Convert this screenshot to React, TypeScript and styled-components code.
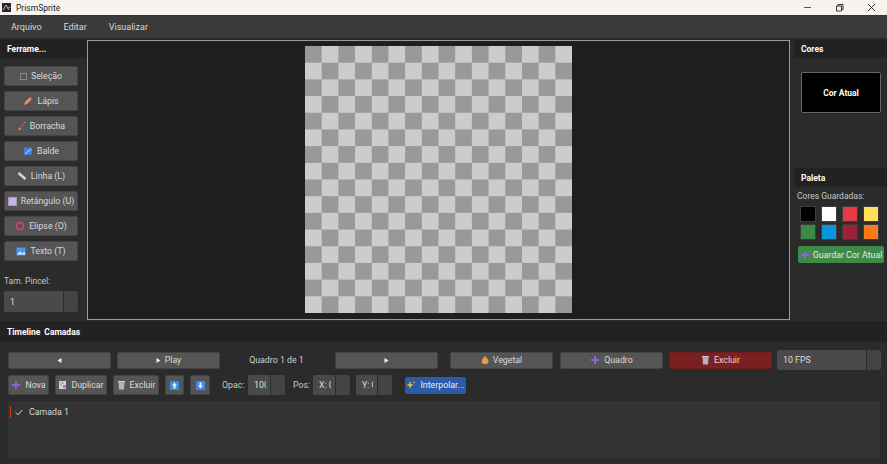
import React from "react";
import styled, { createGlobalStyle, css } from "styled-components";

const Global = createGlobalStyle`
  html, body { margin: 0; padding: 0; background: #2b2b2b; }
  * { box-sizing: border-box; }
  #root { width: 887px; height: 464px; overflow: hidden; }
`;

const Window = styled.div`
  width: 887px; height: 464px; display: flex; flex-direction: column;
  background: #2b2b2b; color: #dcdcdc;
  font-family: Roboto, "Open Sans", "Liberation Sans", sans-serif; font-size: 8.8px;
`;
const TitleBar = styled.div`
  height: 15px; flex: none; background: #f9f3ef; color: #222; display: flex; align-items: center;
  padding-left: 2px; font-size: 8.5px;
`;
const TitleText = styled.span` margin-left: 5px; `;
const WinControls = styled.div` margin-left: auto; display: flex; `;
const WinButton = styled.div` width: 32px; height: 15px; display: flex; align-items: center; justify-content: center; `;
const MenuBar = styled.div`
  height: 23px; flex: none; background: #3a3a3a; display: flex; align-items: center; padding-left: 11px; gap: 22px;
  font-size: 9px; color: #d8d8d8; border-top: 1px solid #333;
`;
const Main = styled.div` height: 283px; flex: none; display: flex; background: #2b2b2b; `;
const LeftDock = styled.aside` width: 87px; flex: none; display: flex; flex-direction: column; `;
const DockHeader = styled.div<{ $mt?: number }>`
  height: 19px; flex: none; background: #222222; color: #fff; font-weight: 700; font-size: 8.5px;
  display: flex; align-items: center; padding-left: 7px; margin-top: ${p => p.$mt ?? 0}px;
`;
const ToolList = styled.div` display: flex; flex-direction: column; gap: 5px; padding: 8px 9px 0 4px; `;
const buttonBase = css`
  display: flex; align-items: center; justify-content: center; gap: 4px; border-radius: 2px;
  background: #555555; border: 1px solid #444; color: #dadada; white-space: nowrap;
  > svg { flex: none; }
`;
const ToolButton = styled.div` ${buttonBase} height: 20px; `;
const SizeLabel = styled.div` margin: 15px 0 0 4px; color: #c8c8c8; font-size: 8.5px; height: 11px; line-height: 11px; `;
const Spin = styled.div<{ $w: number; $h?: number; $btn?: number; $pr?: number }>`
  display: flex; width: ${p => p.$w}px; height: ${p => p.$h ?? 20}px; gap: 1px; flex: none;
  > span { flex: 1; min-width: 0; background: #4a4a4a; border-radius: 2px 0 0 2px; display: flex; align-items: center; padding: 0 ${p => p.$pr ?? 0}px 0 6px; color: #ddd; white-space: nowrap; }
  > span > b { font-weight: 400; overflow: hidden; display: block; }
  > i { width: ${p => p.$btn ?? 14}px; flex: none; background: #444; border-radius: 0 2px 2px 0; }
`;
const SizeSpin = styled(Spin)` margin: 4px 0 0 4px; `;
const CanvasArea = styled.main`
  width: 703px; height: 280px; flex: none; margin-top: 2px; background: #1e1e1e; border: 1px solid #9c9c9c;
  display: flex; align-items: center; justify-content: center;
`;
const Checker = styled.div`
  width: 267px; height: 267px; margin-top: -1px;
  background-color: #999999;
  background-image: conic-gradient(#cccccc 25%, transparent 0 50%, #cccccc 0 75%, transparent 0);
  background-size: 33.375px 33.375px;
`;
const RightDock = styled.aside` width: 97px; flex: none; padding: 1px 0 0 4px; display: flex; flex-direction: column; `;
const CurrentColor = styled.div`
  width: 80px; height: 41px; margin: 14px 0 0 7px; background: #000; border: 1px solid #666; border-radius: 2px;
  display: flex; align-items: center; justify-content: center; color: #fff; font-weight: 700; font-size: 8.5px;
`;
const SavedLabel = styled.div` margin: 4px 0 0 3px; color: #c8c8c8; font-size: 8.5px; height: 11px; line-height: 11px; `;
const SwatchGrid = styled.div` display: grid; grid-template-columns: repeat(4, 16px); column-gap: 5px; row-gap: 2px; margin: 4px 0 0 6px; `;
const Swatch = styled.div<{ $c: string }>` height: 16px; background: ${p => p.$c}; border: 1px solid #3c3c3c; border-radius: 1px; `;
const SaveButton = styled.div`
  ${buttonBase} width: 86px; height: 17px; margin: 6px 0 0 4px; gap: 3px; background: #3f8a46; border-color: #3f8a46; color: #eaeaea;
`;
const Bottom = styled.section` flex: 1; display: flex; flex-direction: column; border-top: 1px solid #232323; `;
const TabHeader = styled.div`
  height: 20px; flex: none; background: #222222; display: flex; align-items: center; gap: 4px; padding-left: 7px;
  color: #fff; font-weight: 700; font-size: 8.5px;
`;
const FrameRow = styled.div` display: flex; align-items: center; height: 20px; margin: 8px 0 0 8px; `;
const FrameButton = styled.div<{ $ml?: number; $danger?: boolean }>`
  ${buttonBase} width: 103px; height: 17px; margin-left: ${p => p.$ml ?? 0}px;
  ${p => p.$danger && css` background: #7a2020; border-color: #6c1e1e; color: #e8dada; `}
`;
const FrameLabel = styled.div` width: 115px; text-align: center; padding-right: 2px; color: #d0d0d0; `;
const FpsSpin = styled(Spin)` margin-left: 5px; `;
const LayerRow = styled.div` display: flex; align-items: center; height: 20px; margin: 5px 0 0 8px; `;
const LayerButton = styled.div<{ $w: number; $ml?: number }>`
  ${buttonBase} width: ${p => p.$w}px; height: 20px; margin-left: ${p => p.$ml ?? 0}px;
`;
const FieldLabel = styled.span<{ $ml: number; $w: number }>` margin-left: ${p => p.$ml}px; width: ${p => p.$w}px; color: #c8c8c8; flex: none; `;
const InterpButton = styled.div`
  ${buttonBase} width: 61px; height: 17px; margin-left: 13px; background: #2a5ca8; border-color: #2a5ca8; color: #e6ecf6;
`;
const LayerPanel = styled.div`
  width: 872px; height: 57px; margin: 6px 0 0 8px; background: #333333; padding: 5px 2px;
`;
const LayerItem = styled.div`
  display: flex; align-items: center; height: 12px; border-left: 1px solid #d03a10; padding-left: 4px; gap: 6px; color: #d8d8d8;
`;

const Pencil = () => <svg width="10" height="10" viewBox="0 0 10 10"><path d="M1 9 L2 6 L6.5 1.5 L8.5 3.5 L4 8 Z" fill="#f28b5a"/><path d="M6.5 1.5 L7.5.8 L9.2 2.5 L8.5 3.5Z" fill="#e8564a"/></svg>;
const Broom = () => <svg width="9" height="10" viewBox="0 0 9 10"><path d="M4 6 L8 1" stroke="#a77" strokeWidth="1"/><path d="M1 9 L2 6.5 L4.5 7 L3.5 9Z" fill="#e0703a"/></svg>;
const Bucket = () => <svg width="10" height="10" viewBox="0 0 10 10"><rect x="1" y="1.5" width="8" height="7.5" rx="1" fill="#3f7fd8"/><path d="M2 8 L8 3" stroke="#8fc0f5" strokeWidth="1.5"/></svg>;
const LineIcon = () => <svg width="10" height="10" viewBox="0 0 10 10"><path d="M1.5 2 L8.5 8" stroke="#d4d4dc" strokeWidth="2.6"/></svg>;
const Rect = () => <svg width="9" height="9" viewBox="0 0 9 9"><rect x=".5" y=".5" width="8" height="8" fill="#c8b4e4" stroke="#a898c0"/></svg>;
const Ring = () => <svg width="10" height="10" viewBox="0 0 10 10"><circle cx="5" cy="5" r="3.5" fill="none" stroke="#ee3d63" strokeWidth="1.4"/></svg>;
const Picture = () => <svg width="10" height="9" viewBox="0 0 10 9"><rect width="9" height="8" x=".5" y=".5" fill="#4a9ae8"/><path d="M1 7 L4 4.5 L6 6 L9 5 V7.5 H1Z" fill="#cfe4f8"/></svg>;
const Empty = () => <svg width="7" height="7" viewBox="0 0 7 7"><rect x=".5" y=".5" width="6" height="6" fill="none" stroke="#888"/></svg>;
const Plus = () => <svg width="10" height="10" viewBox="0 0 10 10"><path d="M5 1 V9 M1 5 H9" stroke="#8a63d8" strokeWidth="2"/></svg>;
const FileIcon = () => <svg width="9" height="10" viewBox="0 0 9 10"><rect x="1" y="1" width="7" height="8" fill="#d8cfe0"/><rect x="5" y="5" width="3" height="3" fill="#d86a9a"/><path d="M2 3 H6 M2 5 H4" stroke="#998"/></svg>;
const Trash = () => <svg width="9" height="10" viewBox="0 0 9 10"><path d="M1.5 2.5 H7.5 L7 9.5 H2Z" fill="#b9afc2"/><rect x="1" y="1" width="7" height="1.4" fill="#d5d0da"/></svg>;
const Arrow = ({ down }: { down?: boolean }) => <svg width="9" height="9" viewBox="0 0 9 9"><rect width="9" height="9" rx="1" fill="#3f8ae8"/><path d={down ? "M3.5 1.5 H5.5 V4.5 H7 L4.5 7.5 L2 4.5 H3.5Z" : "M3.5 7.5 H5.5 V4.5 H7 L4.5 1.5 L2 4.5 H3.5Z"} fill="#f0f6ff"/></svg>;
const Spark = () => <svg width="10" height="10" viewBox="0 0 10 10"><path d="M4 1 L5 4 L8 5 L5 6 L4 9 L3 6 L0.5 5 L3 4Z" fill="#f5b62e"/><path d="M8 1 L8.5 2 L9.5 2.5 L8.5 3 L8 4 L7.5 3 L6.5 2.5 L7.5 2Z" fill="#f09a2a"/></svg>;
const Onion = () => <svg width="8" height="10" viewBox="0 0 8 10"><path d="M4 1 C5 3 7.5 4 7.5 6.2 C7.5 8.2 6 9 4 9 C2 9 .5 8.2 .5 6.2 C.5 4 3 3 4 1Z" fill="#e89a4a"/></svg>;
const TriLeft = () => <svg width="5" height="5" viewBox="0 0 5 5"><path d="M4.5 0 V5 L.5 2.5Z" fill="#eee"/></svg>;
const TriRight = () => <svg width="5" height="5" viewBox="0 0 5 5"><path d="M.5 0 V5 L4.5 2.5Z" fill="#eee"/></svg>;
const Check = () => <svg width="8" height="7" viewBox="0 0 8 7"><path d="M.8 3.5 L3 5.8 L7.2 1" fill="none" stroke="#ddd" strokeWidth="1"/></svg>;
const AppLogo = () => <svg width="9" height="9" viewBox="0 0 9 9"><rect width="9" height="9" fill="#23262c"/><path d="M1 7 L4 2 L7 7" fill="none" stroke="#ddd" strokeWidth=".8"/><path d="M5 5 L8.5 4" stroke="#e8a13a" strokeWidth=".8"/></svg>;

const tools: [React.ReactNode, string][] = [
  [<Empty />, "Seleção"], [<Pencil />, "Lápis"], [<Broom />, "Borracha"], [<Bucket />, "Balde"],
  [<LineIcon />, "Linha (L)"], [<Rect />, "Retângulo (U)"], [<Ring />, "Elipse (O)"], [<Picture />, "Texto (T)"],
];
const swatches = ["#000000", "#ffffff", "#e63946", "#ffe05c", "#3d8b45", "#0a96dd", "#9b2335", "#fb7a1c"];

export default function App() {
  return (
    <Window>
      <Global />
      <TitleBar>
        <AppLogo /><TitleText>PrismSprite</TitleText>
        <WinControls>
          <WinButton><svg width="9" height="9" viewBox="0 0 9 9"><path d="M1 4.5 H8" stroke="#555"/></svg></WinButton>
          <WinButton><svg width="9" height="9" viewBox="0 0 9 9"><path d="M1.5 3 H6.5 V8 H1.5Z M3 3 V1.5 H8 V6.5 H6.5" fill="none" stroke="#333"/></svg></WinButton>
          <WinButton><svg width="9" height="9" viewBox="0 0 9 9"><path d="M1 1 L8 8 M8 1 L1 8" stroke="#333"/></svg></WinButton>
        </WinControls>
      </TitleBar>
      <MenuBar><span>Arquivo</span><span>Editar</span><span>Visualizar</span></MenuBar>
      <Main>
        <LeftDock>
          <DockHeader $mt={1}>Ferrame...</DockHeader>
          <ToolList>
            {tools.map(([icon, label]) => <ToolButton key={label}>{icon}{label}</ToolButton>)}
          </ToolList>
          <SizeLabel>Tam. Pincel:</SizeLabel>
          <SizeSpin $w={74} $h={21}><span>1</span><i /></SizeSpin>
        </LeftDock>
        <CanvasArea><Checker /></CanvasArea>
        <RightDock>
          <DockHeader>Cores</DockHeader>
          <CurrentColor>Cor Atual</CurrentColor>
          <DockHeader $mt={55}>Paleta</DockHeader>
          <SavedLabel>Cores Guardadas:</SavedLabel>
          <SwatchGrid>{swatches.map(c => <Swatch key={c} $c={c} />)}</SwatchGrid>
          <SaveButton><Plus />Guardar Cor Atual</SaveButton>
        </RightDock>
      </Main>
      <Bottom>
        <TabHeader><span>Timeline</span><span>Camadas</span></TabHeader>
        <FrameRow>
          <FrameButton><TriLeft /></FrameButton>
          <FrameButton $ml={6}><TriRight />Play</FrameButton>
          <FrameLabel>Quadro 1 de 1</FrameLabel>
          <FrameButton><TriRight /></FrameButton>
          <FrameButton $ml={12}><Onion />Vegetal</FrameButton>
          <FrameButton $ml={7}><Plus />Quadro</FrameButton>
          <FrameButton $ml={6} $danger><Trash />Excluir</FrameButton>
          <FpsSpin $w={104}><span>10 FPS</span><i /></FpsSpin>
        </FrameRow>
        <LayerRow>
          <LayerButton $w={41}><Plus />Nova</LayerButton>
          <LayerButton $w={52} $ml={6}><FileIcon />Duplicar</LayerButton>
          <LayerButton $w={46} $ml={6}><Trash />Excluir</LayerButton>
          <LayerButton $w={19} $ml={6}><Arrow /></LayerButton>
          <LayerButton $w={20} $ml={6}><Arrow down /></LayerButton>
          <FieldLabel $ml={12} $w={26}>Opac:</FieldLabel>
          <Spin $w={37} $pr={4}><span><b>100</b></span><i /></Spin>
          <FieldLabel $ml={8} $w={20}>Pos:</FieldLabel>
          <Spin $w={37} $pr={4}><span><b>X: 0</b></span><i /></Spin>
          <FieldLabel $ml={6} $w={0}></FieldLabel>
          <Spin $w={36} $pr={4}><span><b>Y: 0</b></span><i /></Spin>
          <InterpButton><Spark />Interpolar...</InterpButton>
        </LayerRow>
        <LayerPanel>
          <LayerItem><Check />Camada 1</LayerItem>
        </LayerPanel>
      </Bottom>
    </Window>
  );
}
